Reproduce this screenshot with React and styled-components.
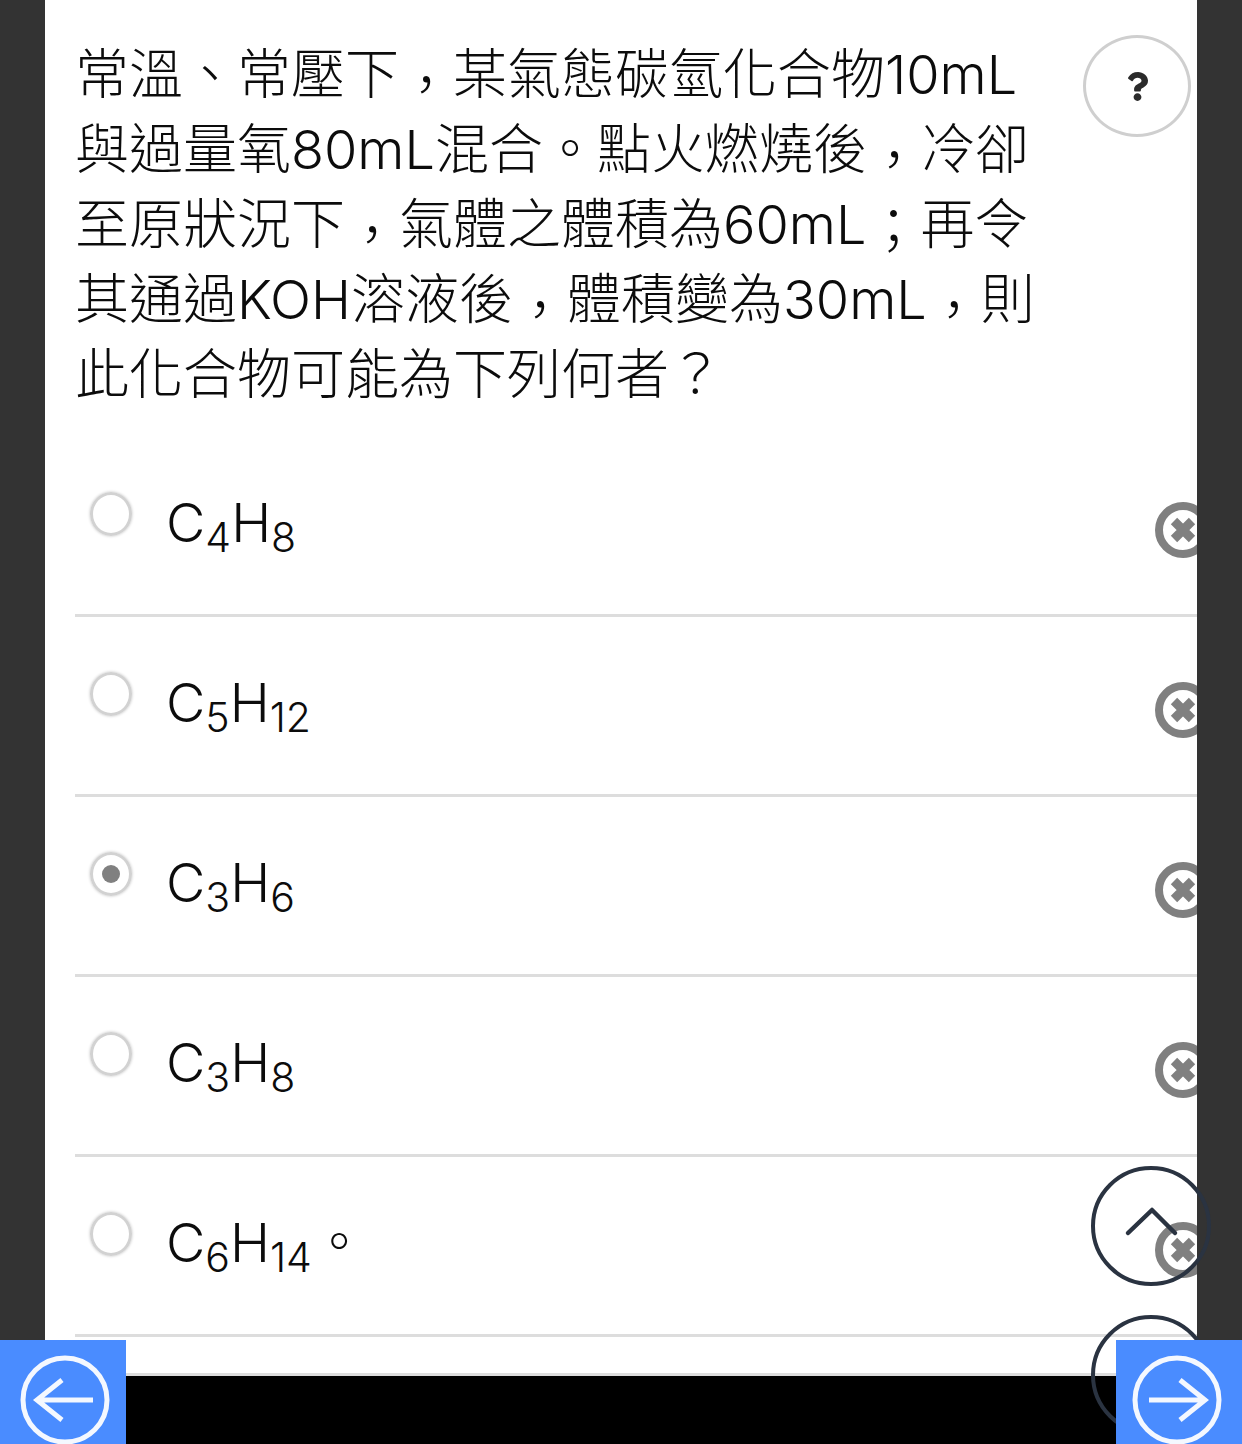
import React from 'react'
import styled, { createGlobalStyle } from 'styled-components'
import { FaQuestion } from 'react-icons/fa'

const GlobalStyle = createGlobalStyle`
  html, body {
    margin: 0;
    padding: 0;
    background: #333333;
    overflow: hidden;
  }
  * {
    box-sizing: border-box;
  }
`

const Page = styled.div`
  position: relative;
  width: 1242px;
  height: 1444px;
  display: flex;
  flex-direction: column;
  overflow: hidden;
  font-family: Inter, "Liberation Sans", "Noto Sans CJK TC", sans-serif;
  font-weight: 300;
  color: #0c0c0c;
`
const Main = styled.div`
  flex: 1;
  padding: 0 45px;
  background: #333333;
  min-height: 0;
`
const Panel = styled.div`
  height: 100%;
  background: #ffffff;
  border-bottom: 3px solid #dddddd;
  overflow: hidden;
`
const Question = styled.div`
  display: flex;
  justify-content: space-between;
  align-items: flex-start;
  padding: 35px 6px 0 30px;
`
const QuestionText = styled.div`
  width: 963px;
  padding-top: 2px;
  font-size: 54px;
  line-height: 75px;
`
const Punct = styled.span`
  line-height: 0;
  vertical-align: -${props => props.drop}px;
`
const HelpButton = styled.div`
  width: 108px;
  height: 102px;
  flex-shrink: 0;
  display: flex;
  align-items: center;
  justify-content: center;
  border: 3px solid #cfcfcf;
  border-radius: 50%;
  color: #2b2b2b;
  font-size: 29px;
`
const Options = styled.div`
  margin: 25px 0 0 30px;
`
const Option = styled.div`
  height: 180px;
  display: flex;
  align-items: flex-start;
  padding-left: 15px;
  border-bottom: 3px solid #dddddd;
  overflow: hidden;
`
const Radio = styled.div`
  width: 42px;
  height: 44px;
  margin-top: 55px;
  flex-shrink: 0;
  display: flex;
  align-items: center;
  justify-content: center;
  border: 3px solid #d2d2d2;
  border-radius: 50%;
  box-shadow: 0 0 3px rgba(0, 0, 0, 0.25);
`
const RadioDot = styled.div`
  width: 18px;
  height: 18px;
  border-radius: 50%;
  background: #808080;
`
const Formula = styled.div`
  flex: 1;
  margin: 48px 0 0 34px;
  font-size: 54px;
  line-height: 75px;
  white-space: pre;
`
const Sub = styled.span`
  font-size: 41px;
  line-height: 0;
  vertical-align: -10px;
`
const RemoveIcon = styled.svg`
  width: 56px;
  height: 56px;
  margin: 65px -14px 0 0;
  flex-shrink: 0;
`
const Footer = styled.div`
  height: 68px;
  background: #000000;
`
const ScrollButton = styled.svg`
  position: absolute;
  left: 1090px;
  top: ${props => props.top}px;
  width: 122px;
  height: 122px;
  filter: blur(0.7px);
`
const NavButton = styled.div`
  position: absolute;
  bottom: 0;
  ${props => props.side}: 0;
  width: 126px;
  height: 104px;
  background: #4a8cff;
`
const NavArrow = styled.svg`
  display: block;
  filter: blur(0.5px);
`

const options = [
  { id: 1, parts: ['C', '4', 'H', '8'] },
  { id: 2, parts: ['C', '5', 'H', '12'] },
  { id: 3, parts: ['C', '3', 'H', '6'], checked: true },
  { id: 4, parts: ['C', '3', 'H', '8'] },
  { id: 5, parts: ['C', '6', 'H', '14'], tail: '。' },
]

const Remove = () => (
  <RemoveIcon viewBox="0 0 56 56">
    <circle cx="28" cy="28" r="24" fill="#fff" stroke="#808080" strokeWidth="8" />
    <path d="M19 19L37 37M37 19L19 37" stroke="#808080" strokeWidth="9" />
  </RemoveIcon>
)

const Arrow = ({ cx, dir }) => (
  <NavArrow width="126" height="104" viewBox="0 0 126 104" fill="none" stroke="#f4f8ff" strokeWidth="5">
    <circle cx={cx} cy="60" r="42" />
    {dir === 'left'
      ? <path d="M93 60H37M62 40L37 60L62 80" />
      : <path d="M33 60H89M64 40L89 60L64 80" />}
  </NavArrow>
)

const App = () => {
  return (
    <Page>
      <GlobalStyle />
      <Main>
        <Panel>
          <Question>
            <QuestionText>
              常溫、常壓下<Punct drop={11}>，</Punct>某氣態碳氫化合物10mL<br />
              與過量氧80mL混合。點火燃燒後<Punct drop={11}>，</Punct>冷卻<br />
              至原狀況下<Punct drop={11}>，</Punct>氣體之體積為60mL<Punct drop={4}>；</Punct>再令<br />
              其通過KOH溶液後<Punct drop={11}>，</Punct>體積變為30mL<Punct drop={11}>，</Punct>則<br />
              此化合物可能為下列何者？
            </QuestionText>
            <HelpButton><FaQuestion /></HelpButton>
          </Question>
          <Options>
            {options.map(o => (
              <Option key={o.id}>
                <Radio>{o.checked && <RadioDot />}</Radio>
                <Formula>
                  {o.parts[0]}<Sub>{o.parts[1]}</Sub>{o.parts[2]}<Sub>{o.parts[3]}</Sub>{o.tail}
                </Formula>
                <Remove />
              </Option>
            ))}
          </Options>
        </Panel>
      </Main>
      <Footer />
      <ScrollButton top={1165} viewBox="0 0 122 122" fill="none" stroke="#2a3341">
        <circle cx="61" cy="61" r="58" strokeWidth="4" />
        <path d="M38 68L62 45L85 68" strokeWidth="4.5" strokeLinecap="round" strokeLinejoin="round" />
      </ScrollButton>
      <ScrollButton top={1314} viewBox="0 0 122 122" fill="none" stroke="#2a3341">
        <circle cx="61" cy="61" r="58" strokeWidth="4" />
        <path d="M38 52L62 75L85 52" strokeWidth="4.5" strokeLinecap="round" strokeLinejoin="round" />
      </ScrollButton>
      <NavButton side="left"><Arrow cx={65} dir="left" /></NavButton>
      <NavButton side="right"><Arrow cx={61} dir="right" /></NavButton>
    </Page>
  )
}

export default App
